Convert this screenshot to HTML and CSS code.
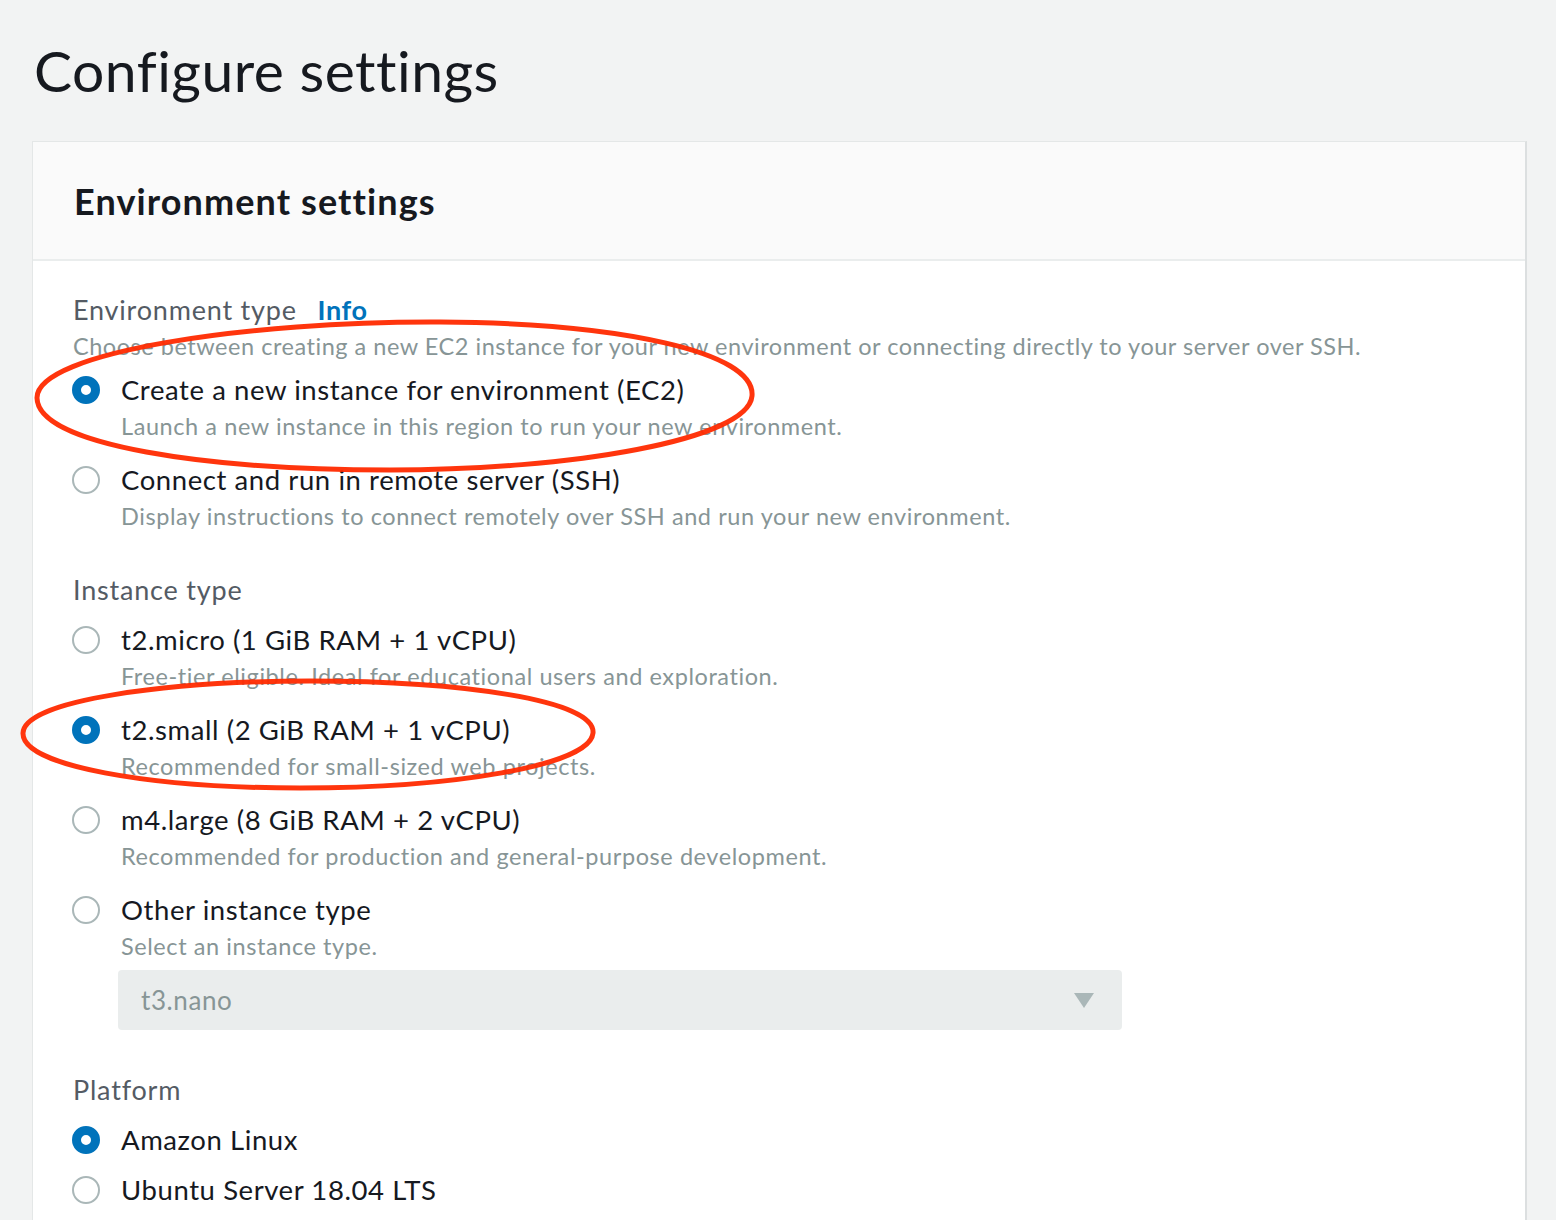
FILE: index.html
```html
<!DOCTYPE html>
<html lang="en">
<head>
<meta charset="utf-8">
<title>Configure settings</title>
<link rel="stylesheet" href="styles.css">
</head>
<body>
<div class="page">
  <h1 class="title">Configure settings</h1>
  <section class="card">
    <header class="card-head">
      <h2>Environment settings</h2>
    </header>
    <div class="card-body">
      <div class="group">
        <div class="label">Environment type <a class="info">Info</a></div>
        <div class="gdesc">Choose between creating a new EC2 instance for your new environment or connecting directly to your server over SSH.</div>
        <div class="options">
          <div class="opt">
            <span class="radio on"></span>
            <div class="opt-text"><div class="opt-title">Create a new instance for environment (EC2)</div><div class="opt-desc">Launch a new instance in this region to run your new environment.</div></div>
          </div>
          <div class="opt">
            <span class="radio"></span>
            <div class="opt-text"><div class="opt-title">Connect and run in remote server (SSH)</div><div class="opt-desc">Display instructions to connect remotely over SSH and run your new environment.</div></div>
          </div>
        </div>
      </div>

      <div class="group">
        <div class="label">Instance type</div>
        <div class="options nodesc-gap">
          <div class="opt">
            <span class="radio"></span>
            <div class="opt-text"><div class="opt-title">t2.micro (1 GiB RAM + 1 vCPU)</div><div class="opt-desc">Free-tier eligible. Ideal for educational users and exploration.</div></div>
          </div>
          <div class="opt">
            <span class="radio on"></span>
            <div class="opt-text"><div class="opt-title">t2.small (2 GiB RAM + 1 vCPU)</div><div class="opt-desc">Recommended for small-sized web projects.</div></div>
          </div>
          <div class="opt">
            <span class="radio"></span>
            <div class="opt-text"><div class="opt-title">m4.large (8 GiB RAM + 2 vCPU)</div><div class="opt-desc">Recommended for production and general-purpose development.</div></div>
          </div>
          <div class="opt">
            <span class="radio"></span>
            <div class="opt-text"><div class="opt-title">Other instance type</div><div class="opt-desc">Select an instance type.</div></div>
          </div>
        </div>
        <div class="select">
          <span class="select-val">t3.nano</span>
          <span class="caret"></span>
        </div>
      </div>

      <div class="group after-select">
        <div class="label">Platform</div>
        <div class="options tight">
          <div class="opt">
            <span class="radio on"></span>
            <div class="opt-text"><div class="opt-title">Amazon Linux</div></div>
          </div>
          <div class="opt">
            <span class="radio"></span>
            <div class="opt-text"><div class="opt-title">Ubuntu Server 18.04 LTS</div></div>
          </div>
        </div>
      </div>
    </div>
  </section>

  <svg class="marks" width="1556" height="1220" viewBox="0 0 1556 1220" aria-hidden="true">
    <path class="mark" d="M 37 398 C 36 352, 250 321, 440 322 C 620 323, 756 352, 752 396 C 748 440, 570 470, 390 470 C 210 470, 38 446, 37 398 Z"/>
    <path class="mark" d="M 23 733 C 24 700, 170 681, 310 681 C 460 681, 596 700, 593 733 C 590 766, 450 788, 300 788 C 150 788, 22 766, 23 733 Z"/>
  </svg>
</div>
</body>
</html>
```

FILE: styles.css
```css
* { box-sizing: border-box; }

html, body {
  margin: 0;
  padding: 0;
  background: #f2f3f3;
}

body {
  font-family: Lato, "Open Sans", "Liberation Sans", sans-serif;
  color: #16191f;
}

.page {
  position: relative;
  width: 1556px;
  height: 1220px;
  overflow: hidden;
  padding: 0 29px 0 32px;
}

.title {
  margin: 0;
  padding: 36px 0 0 2px;
  height: 141px;
  font-size: 57px;
  font-weight: 400;
  line-height: 68px;
  color: #16191f;
  letter-spacing: 0.5px;
}

.card {
  background: #ffffff;
  border: 1px solid #e4e7e7;
  border-right: 2px solid #dcdfe0;
  min-height: 1100px;
}

.card-head {
  background: #fafafa;
  height: 119px;
  border-bottom: 2px solid #eaeded;
  display: flex;
  align-items: center;
  padding-left: 41px;
}

.card-head h2 {
  margin: 0;
  font-size: 36px;
  font-weight: 700;
  line-height: 44px;
  color: #16191f;
  letter-spacing: 1.1px;
}

.card-body {
  padding: 31px 40px 0 40px;
}

.group + .group {
  margin-top: 38px;
}

.group.after-select {
  margin-top: 42px;
}

.label {
  font-size: 27px;
  line-height: 36px;
  color: #545b64;
  letter-spacing: 0.8px;
}

.info {
  color: #0073bb;
  font-weight: 700;
  margin-left: 13px;
  letter-spacing: 0.6px;
}

.gdesc {
  font-size: 23.5px;
  line-height: 36px;
  color: #879596;
  letter-spacing: 0.53px;
}

.options {
  display: flex;
  flex-direction: column;
  gap: 18px;
  margin-top: 8px;
}

.options.nodesc-gap {
  margin-top: 14px;
}

.options.tight {
  margin-top: 14px;
  gap: 14px;
}

.opt {
  display: flex;
  align-items: flex-start;
}

.radio {
  flex: none;
  width: 28px;
  height: 28px;
  border-radius: 50%;
  border: 2px solid #aab7b8;
  background: #fff;
  margin: 4px 21px 0 -1px;
}

.radio.on {
  border: 9px solid #0073bb;
}

.opt-title {
  font-size: 27.5px;
  line-height: 36px;
  color: #16191f;
  letter-spacing: 0.58px;
}

.opt-desc {
  font-size: 23.5px;
  line-height: 36px;
  color: #879596;
  letter-spacing: 0.58px;
}

.select {
  margin: 6px 0 0 45px;
  width: 1004px;
  height: 60px;
  border-radius: 4px;
  background: #eaeded;
  display: flex;
  align-items: center;
  justify-content: space-between;
  padding: 0 28px 0 23px;
}

.select-val {
  font-size: 26px;
  color: #879596;
  letter-spacing: 0.6px;
}

.caret {
  width: 0;
  height: 0;
  border-left: 10px solid transparent;
  border-right: 10px solid transparent;
  border-top: 15px solid #aab7b8;
}

.marks {
  position: absolute;
  left: 0;
  top: 0;
  pointer-events: none;
}

.mark {
  fill: none;
  stroke: #ff2a00;
  stroke-width: 5;
  stroke-linecap: round;
  stroke-linejoin: round;
  opacity: 0.95;
}
```
